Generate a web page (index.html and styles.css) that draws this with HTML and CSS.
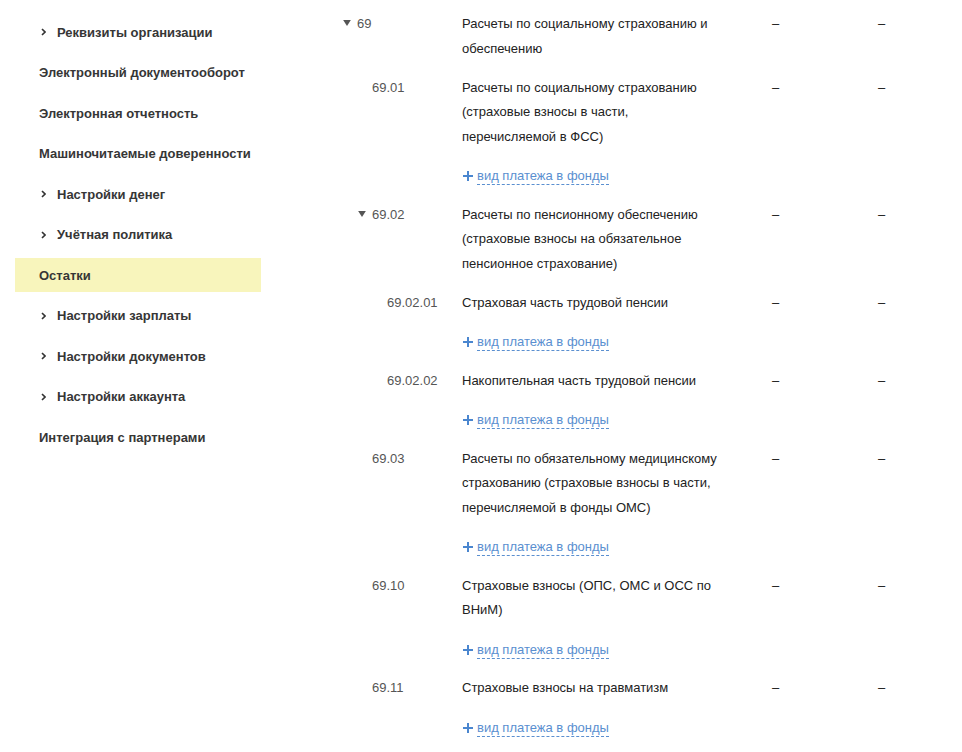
FILE: index.html
```html
<!DOCTYPE html>
<html lang="ru">
<head>
<meta charset="utf-8">
<title>Остатки</title>
<link rel="stylesheet" href="styles.css">
</head>
<body>
<div class="page">
  <nav class="sidebar">
    <div class="item"><span class="chev"><svg width="5" height="8" viewBox="0 0 5 8"><path d="M1 1l3 3-3 3" fill="none" stroke="#333" stroke-width="1.6"/></svg></span>Реквизиты организации</div>
    <div class="item">Электронный документооборот</div>
    <div class="item">Электронная отчетность</div>
    <div class="item">Машиночитаемые доверенности</div>
    <div class="item"><span class="chev"><svg width="5" height="8" viewBox="0 0 5 8"><path d="M1 1l3 3-3 3" fill="none" stroke="#333" stroke-width="1.6"/></svg></span>Настройки денег</div>
    <div class="item"><span class="chev"><svg width="5" height="8" viewBox="0 0 5 8"><path d="M1 1l3 3-3 3" fill="none" stroke="#333" stroke-width="1.6"/></svg></span>Учётная политика</div>
    <div class="item active">Остатки</div>
    <div class="item"><span class="chev"><svg width="5" height="8" viewBox="0 0 5 8"><path d="M1 1l3 3-3 3" fill="none" stroke="#333" stroke-width="1.6"/></svg></span>Настройки зарплаты</div>
    <div class="item"><span class="chev"><svg width="5" height="8" viewBox="0 0 5 8"><path d="M1 1l3 3-3 3" fill="none" stroke="#333" stroke-width="1.6"/></svg></span>Настройки документов</div>
    <div class="item"><span class="chev"><svg width="5" height="8" viewBox="0 0 5 8"><path d="M1 1l3 3-3 3" fill="none" stroke="#333" stroke-width="1.6"/></svg></span>Настройки аккаунта</div>
    <div class="item">Интеграция с партнерами</div>
  </nav>

  <main class="table">
    <div class="row">
      <div class="code l0"><span class="toggle"><svg width="9" height="7" viewBox="0 0 9 7"><path d="M0 0h9L4.5 7z" fill="#555"/></svg></span>69</div>
      <div class="name">Расчеты по социальному страхованию и обеспечению</div>
      <div class="num">–</div><div class="num">–</div>
    </div>
    <div class="row">
      <div class="code l1"><span class="toggle"></span>69.01</div>
      <div class="name">Расчеты по социальному страхованию (страховые взносы в части, перечисляемой в ФСС)</div>
      <div class="num">–</div><div class="num">–</div>
    </div>
    <div class="row link-row">
      <div class="code"></div>
      <div class="name"><span class="add"><svg class="plus" width="10" height="10" viewBox="0 0 10 10"><path d="M5 0v10M0 5h10" stroke="#4a86cf" stroke-width="2"/></svg><span class="dash">вид платежа в фонды</span></span></div>
    </div>
    <div class="row">
      <div class="code l1"><span class="toggle"><svg width="9" height="7" viewBox="0 0 9 7"><path d="M0 0h9L4.5 7z" fill="#555"/></svg></span>69.02</div>
      <div class="name">Расчеты по пенсионному обеспечению (страховые взносы на обязательное пенсионное страхование)</div>
      <div class="num">–</div><div class="num">–</div>
    </div>
    <div class="row">
      <div class="code l2"><span class="toggle"></span>69.02.01</div>
      <div class="name">Страховая часть трудовой пенсии</div>
      <div class="num">–</div><div class="num">–</div>
    </div>
    <div class="row link-row">
      <div class="code"></div>
      <div class="name"><span class="add"><svg class="plus" width="10" height="10" viewBox="0 0 10 10"><path d="M5 0v10M0 5h10" stroke="#4a86cf" stroke-width="2"/></svg><span class="dash">вид платежа в фонды</span></span></div>
    </div>
    <div class="row">
      <div class="code l2"><span class="toggle"></span>69.02.02</div>
      <div class="name">Накопительная часть трудовой пенсии</div>
      <div class="num">–</div><div class="num">–</div>
    </div>
    <div class="row link-row">
      <div class="code"></div>
      <div class="name"><span class="add"><svg class="plus" width="10" height="10" viewBox="0 0 10 10"><path d="M5 0v10M0 5h10" stroke="#4a86cf" stroke-width="2"/></svg><span class="dash">вид платежа в фонды</span></span></div>
    </div>
    <div class="row">
      <div class="code l1"><span class="toggle"></span>69.03</div>
      <div class="name">Расчеты по обязательному медицинскому страхованию (страховые взносы в части, перечисляемой в фонды ОМС)</div>
      <div class="num">–</div><div class="num">–</div>
    </div>
    <div class="row link-row">
      <div class="code"></div>
      <div class="name"><span class="add"><svg class="plus" width="10" height="10" viewBox="0 0 10 10"><path d="M5 0v10M0 5h10" stroke="#4a86cf" stroke-width="2"/></svg><span class="dash">вид платежа в фонды</span></span></div>
    </div>
    <div class="row">
      <div class="code l1"><span class="toggle"></span>69.10</div>
      <div class="name">Страховые взносы (ОПС, ОМС и ОСС по ВНиМ)</div>
      <div class="num">–</div><div class="num">–</div>
    </div>
    <div class="row link-row">
      <div class="code"></div>
      <div class="name"><span class="add"><svg class="plus" width="10" height="10" viewBox="0 0 10 10"><path d="M5 0v10M0 5h10" stroke="#4a86cf" stroke-width="2"/></svg><span class="dash">вид платежа в фонды</span></span></div>
    </div>
    <div class="row">
      <div class="code l1"><span class="toggle"></span>69.11</div>
      <div class="name">Страховые взносы на травматизм</div>
      <div class="num">–</div><div class="num">–</div>
    </div>
    <div class="row link-row">
      <div class="code"></div>
      <div class="name"><span class="add"><svg class="plus" width="10" height="10" viewBox="0 0 10 10"><path d="M5 0v10M0 5h10" stroke="#4a86cf" stroke-width="2"/></svg><span class="dash">вид платежа в фонды</span></span></div>
    </div>
  </main>
</div>
</body>
</html>
```

FILE: styles.css
```css
html, body {
  margin: 0;
  padding: 0;
  background: #fff;
}
body {
  font-family: "Liberation Sans", Arial, sans-serif;
  font-size: 13px;
  color: #333;
  overflow: hidden;
}
.page {
  display: flex;
  align-items: flex-start;
}
.sidebar {
  margin-left: 15px;
  padding-top: 15px;
  width: 246px;
  flex: none;
  display: flex;
  flex-direction: column;
  gap: 6.5px;
}
.item {
  height: 34px;
  display: flex;
  align-items: center;
  padding-left: 24px;
  font-weight: bold;
  color: #363636;
}
.item.active {
  background: #f8f5bc;
}
.chev {
  display: inline-flex;
  width: 18px;
  margin-left: 2px;
  margin-right: -2px;
}
.chev svg { display: block; }

.table {
  margin-left: 81px;
  padding-top: 5px;
  flex: 1;
}
.row {
  display: grid;
  grid-template-columns: 120px 310px 106px 1fr;
  line-height: 24.5px;
  padding: 7.25px 0;
}
.row.link-row {
  padding: 8.75px 0 5.75px;
}
.code {
  display: flex;
  color: #555;
}
.code.l1 { padding-left: 15px; }
.code.l2 { padding-left: 30px; }
.toggle {
  width: 15px;
  flex: none;
  display: flex;
  align-items: center;
  padding-left: 1px;
  box-sizing: border-box;
  height: 22px;
}
.toggle svg { display: block; width: 8px; height: 6px; }
.name {
  color: #222;
  padding-right: 54px;
}
.num {
  color: #111;
}
.add {
  display: inline-flex;
  align-items: center;
  color: #5a8fd0;
}
.plus {
  display: block;
  margin-left: 1px;
  margin-right: 4px;
}
.dash {
  line-height: 17px;
  border-bottom: 1px dashed #5a8fd0;
}
```
